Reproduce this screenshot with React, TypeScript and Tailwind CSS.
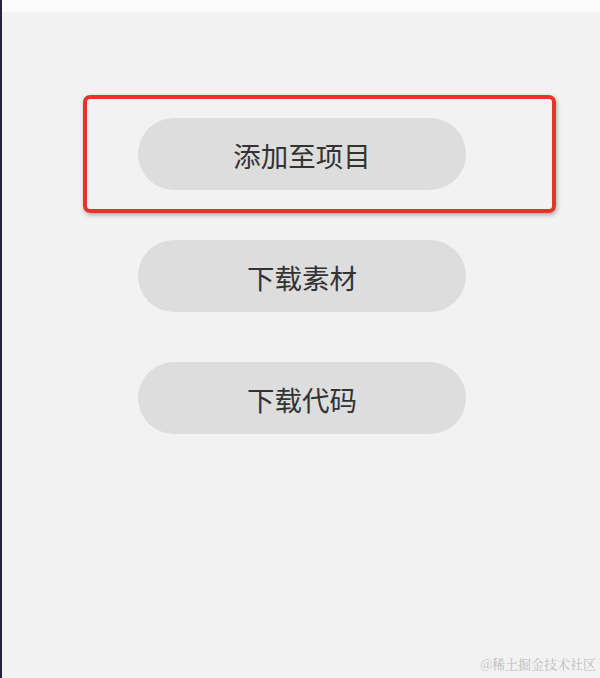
import React from 'react';

const items = ['添加至项目', '下载素材', '下载代码'];

export default function App() {
  return (
    <div className="flex h-[678px] w-[600px] overflow-hidden bg-[#f2f2f2] font-['Noto_Sans_CJK_SC',sans-serif]">
      {/* left edge of the window */}
      <div className="w-[2px] shrink-0 bg-[#27233f]" />
      <div className="relative flex flex-1 flex-col">
        <div className="h-[12px] bg-[#fbfbfb]" />
        <div className="flex flex-col pl-[136px] pt-[106px] gap-[50px]">
          {items.map((label, i) => (
            <button
              key={label}
              className="relative flex h-[72px] w-[328px] items-center justify-center rounded-full bg-[#dddddd] pt-[3px] text-[27.5px] text-[#333333]"
            >
              {label}
              {i === 0 && (
                <span className="pointer-events-none absolute left-[-55px] top-[-23px] h-[118px] w-[473px] rounded-[7px] border-[4px] border-[#e5352b] shadow-[1px_2px_4px_rgba(0,0,0,0.3)]" />
              )}
            </button>
          ))}
        </div>
        <div className="absolute bottom-[5px] right-[4px] font-['Noto_Serif_CJK_SC','Noto_Sans_CJK_SC',serif] text-[13px] text-[#bdbdbd]">
          @稀土掘金技术社区
        </div>
      </div>
    </div>
  );
}
